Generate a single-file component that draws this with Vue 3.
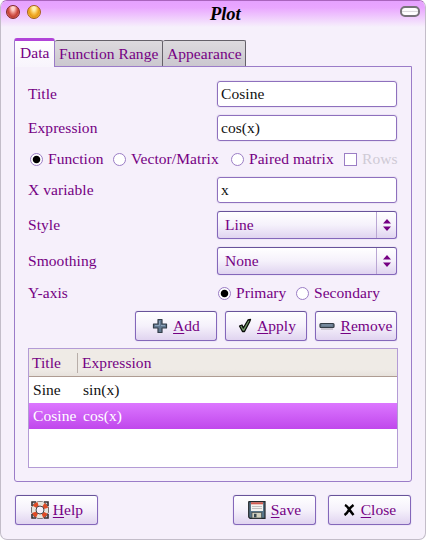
<script setup>
import { ref } from 'vue'

const plotTitle = ref('Cosine')
const expression = ref('cos(x)')
const variable = ref('x')
const kind = ref('Function')
const axis = ref('Primary')
const selected = ref(1)
const kinds = ['Function', 'Vector/Matrix', 'Paired matrix']
const axes = ['Primary', 'Secondary']
const plots = [
  { title: 'Sine', expression: 'sin(x)' },
  { title: 'Cosine', expression: 'cos(x)' },
]
</script>

<template>
  <div class="window">
    <header class="titlebar">
      <span class="orb red"></span><span class="orb amber"></span>
      <span class="caption">Plot</span>
      <span class="pill"></span>
    </header>

    <nav class="tabs">
      <div class="tab active">Data</div>
      <div class="tab range">Function Range</div>
      <div class="tab look">Appearance</div>
    </nav>

    <main class="panel">
      <div class="row entry"><label>Title</label><input v-model="plotTitle" class="field" /></div>
      <div class="row entry"><label>Expression</label><input v-model="expression" class="field" /></div>
      <div class="row kinds">
        <span v-for="k in kinds" :key="k" class="choice" @click="kind = k">
          <i class="radio" :class="{ on: kind === k }"></i>{{ k }}
        </span>
        <span class="choice disabled"><i class="check"></i>Rows</span>
      </div>
      <div class="row entry"><label>X variable</label><input v-model="variable" class="field" /></div>
      <div class="row combo-row">
        <label>Style</label>
        <div class="combo"><span>Line</span><b><svg width="8" height="12" viewBox="0 0 8 12"><path d="M4 0L8 4.500H0ZM4 12L8 7.500H0Z" fill="#750083" /></svg></b></div>
      </div>
      <div class="row combo-row">
        <label>Smoothing</label>
        <div class="combo"><span>None</span><b><svg width="8" height="12" viewBox="0 0 8 12"><path d="M4 0L8 4.500H0ZM4 12L8 7.500H0Z" fill="#750083" /></svg></b></div>
      </div>
      <div class="row axis">
        <label>Y-axis</label>
        <span v-for="a in axes" :key="a" class="choice" @click="axis = a">
          <i class="radio" :class="{ on: axis === a }"></i>{{ a }}
        </span>
      </div>

      <div class="row actions">
        <button class="btn">
          <svg class="add" width="16" height="16" viewBox="0 0 16 16">
            <path d="M6 1.500h4v4.500h4.500v4H10v4.500H6V10H1.500V6H6Z" fill="#637991" stroke="#343f4b" stroke-width="1.200" stroke-linejoin="round" />
            <path d="M7.500 3v4.500H3M9 7.500h4" fill="none" stroke="#8ba2b8" />
          </svg>
          <span><u>A</u>dd</span>
        </button>
        <button class="btn apply">
          <svg width="14" height="16" viewBox="0 0 14 16">
            <path d="M1.500 8L4 7L5.300 10L10 2L12.500 1.500L11.500 4L6.500 13.500H4.500Z" fill="#719567" stroke="#080b08" stroke-width="1.300" stroke-linejoin="round" />
          </svg>
          <span><u>A</u>pply</span>
        </button>
        <button class="btn">
          <svg class="remove" width="16" height="16" viewBox="0 0 16 16">
            <rect x="1" y="5.500" width="14" height="4" rx="1" fill="#67798c" stroke="#333c46" stroke-width="1.200" />
            <path d="M3 7h10" stroke="#8297ab" /><path d="M2 11h12" stroke="#aaa5b0" />
          </svg>
          <span><u>R</u>emove</span>
        </button>
      </div>

      <div class="table">
        <div class="thead"><span class="c1">Title</span><span class="c2">Expression</span></div>
        <div v-for="(p, i) in plots" :key="p.title" class="tr" :class="{ sel: selected === i }" @click="selected = i">
          <span class="c1">{{ p.title }}</span><span class="c2">{{ p.expression }}</span>
        </div>
      </div>
    </main>

    <footer class="footer">
      <button class="btn help">
        <svg width="20" height="20" viewBox="0 0 20 20">
          <path d="M2 6V2h4M14 2h4v4M18 14v4h-4M6 18H2v-4" fill="none" stroke="#332f2e" stroke-width="1.600" />
          <circle cx="10" cy="10" r="9" fill="#302c2a" />
          <circle cx="10" cy="10" r="6.200" fill="none" stroke="#e8e5dc" stroke-width="4.400" />
          <circle cx="10" cy="10" r="6.200" fill="none" stroke="#df4b25" stroke-width="4.400" stroke-dasharray="4.200 5.539" stroke-dashoffset="-2.800" />
          <circle cx="10" cy="10" r="4" fill="#f6f1fb" stroke="#4b4746" />
        </svg>
        <span><u>H</u>elp</span>
      </button>
      <button class="btn save">
        <svg width="18" height="18" viewBox="0 0 18 18">
          <path d="M1 .7H17V17.300H2L.7 16V1Z" fill="#587589" stroke="#23272b" stroke-width="1.200" />
          <rect x="3" y="1.500" width="12" height="8.500" fill="#f4f3f0" />
          <rect x="3" y="1.300" width="12" height="2" fill="#d35a50" />
          <path d="M4 5.500h10M4 7.500h10" stroke="#c2bfc0" />
          <rect x="4" y="11.500" width="9.500" height="5.500" fill="#d2d1bf" stroke="#474b4b" stroke-width=".7" />
          <rect x="6" y="12.800" width="2.500" height="3.500" fill="#364650" />
        </svg>
        <span><u>S</u>ave</span>
      </button>
      <button class="btn close">
        <svg width="12" height="12" viewBox="0 0 12 12">
          <path d="M2 1Q4 2 6 5T10.500 11M10.500 1Q7 3.500 5.500 6.500T1.500 11" fill="none" stroke="#000" stroke-width="2.500" />
        </svg>
        <span><u>C</u>lose</span>
      </button>
    </footer>
  </div>
</template>

<style>
body { margin: 0; background: #fff; }
</style>

<style scoped>
* { box-sizing: border-box; }
.window {
  width: 426px; height: 540px; overflow: hidden; display: flex; flex-direction: column;
  border: 1px solid #c3bdc9; border-top-color: #a963bd; border-radius: 7px; background: #f6f0fb;
  color: #750083; font: 15.5px/20px "Liberation Serif", serif; letter-spacing: .06px; white-space: nowrap;
}
.titlebar {
  height: 26px; flex: none; display: flex; align-items: flex-start; padding: 4px 5px 0;
  background: linear-gradient(#e6a1ff, #e9a6ff 25%, #f6f0fb);
}
.orb { width: 14px; height: 14px; border-radius: 50%; margin-right: 7px; border: 1px solid; }
.red { border-color: #7c2727; background: radial-gradient(ellipse at 50% 18%, #ffd1cb 0 15%, #dd6a60 45%, #c24036 62%, #ff9b8e); }
.amber { border-color: #a36116; background: radial-gradient(ellipse at 50% 18%, #fff1b0 0 15%, #f5b83c 45%, #e79a18 62%, #ffe55f); }
.caption { margin: 1px auto 0 162px; color: #000; font: italic bold 18.5px/17px "Z003", "URW Chancery L", "Liberation Serif", cursive; letter-spacing: -.1px; }
.pill { width: 20px; height: 11px; margin-top: 1px; border: 2px solid #777379; border-radius: 5px; background: linear-gradient(#fff 35%, #cfcbd1 45%, #fff 65%); }
.tabs { height: 39px; flex: none; margin-left: 13px; padding-top: 11px; display: flex; align-items: flex-end; position: relative; z-index: 1; }
.tab { height: 26px; padding: 3px 4px 0; border: 1px solid #656169; border-left: 0; border-radius: 2px 2px 0 0; border-bottom: 0; background: linear-gradient(#dddade, #cbc8cf); }
.tab.active { width: 41px; height: 29px; margin-bottom: -1px; padding: 2px 5px 0; border: 1px solid #9b7cc8; border-top: 3px solid #b143d8; border-bottom: 0; border-radius: 3px 3px 0 0; background: linear-gradient(#fff, #f8f4fc); }
.tab.range { width: 108px; }
.tab.look { width: 83px; }
.panel { width: 398px; height: 416px; flex: none; margin-left: 13px; padding: 14px 13px 0; border: 1px solid #9b7cc8; border-radius: 0 0 3px 3px; display: flex; flex-direction: column; }
.row { display: flex; align-items: center; flex: none; }
.row label { width: 189px; }
.entry { height: 26px; margin-bottom: 8px; }
.field { width: 180px; height: 26px; padding: 0 3px; border: 1px solid #8e70bd; border-radius: 3px; outline: 0; background: #fff; color: #111; font: inherit; letter-spacing: inherit; box-shadow: 0 0 0 1px #ece4f5; }
.kinds { height: 20px; margin: 0 0 8px 2px; }
.choice { display: flex; align-items: center; }
.radio, .check { width: 13px; height: 13px; margin-right: 5px; border: 1px solid #9b7dc5; background: #fff; flex: none; }
.radio { border-radius: 50%; }
.radio.on { background: radial-gradient(circle, #000 0 3.300px, #fff 4.200px); }
.kinds .choice:nth-child(1) { width: 83px; }
.kinds .choice:nth-child(2) { width: 118px; }
.kinds .choice:nth-child(3) { width: 113px; }
.disabled { color: #cfcad5; }
.combo-row { height: 28px; margin-bottom: 8px; }
.combo, .btn { border: 1px solid; border-color: #68539a #8467ba #8467ba; border-radius: 3px; background: linear-gradient(#fff, #f5f1fb 50%, #e0d4f0); box-shadow: 0 0 0 1px #eee7f7; }
.combo { width: 180px; height: 28px; display: flex; align-items: center; padding-left: 7px; }
.combo b { width: 20px; height: 26px; margin-left: auto; border-left: 1px solid #b9a6d3; display: flex; align-items: center; justify-content: center; }
.axis { height: 20px; margin-bottom: 8px; }
.axis label { width: 190px; }
.axis .choice { width: 78px; }
.actions { height: 30px; margin: 0 0 7px 107px; gap: 8px; }
.btn { width: 82px; height: 30px; padding: 0; display: flex; align-items: center; justify-content: center; gap: 5px; color: inherit; font: inherit; letter-spacing: inherit; }
.btn u { text-underline-offset: 2px; text-decoration-thickness: 1px; }
.btn svg { flex: none; }
.apply { padding-left: 2px; }
.table { width: 370px; height: 120px; flex: none; border: 1px solid #b39bd5; background: #fff; color: #111; }
.thead { height: 28px; display: flex; align-items: center; color: #750083; border-bottom: 1px solid #ae9c92; background: linear-gradient(#efebe6 75%, #e7e2dc); }
.thead .c1 { width: 49px; padding-left: 3px; border-right: 1px solid #b8aea9; }
.thead .c2 { padding-left: 4px; }
.tr { height: 26px; display: flex; align-items: center; padding-left: 4px; }
.tr .c1 { width: 50px; }
.sel { background: linear-gradient(#dc77ff, #c047ec); color: #fff; }
.footer { display: flex; margin: 13px 13px 0 14px; }
.footer .btn { width: 83px; }
.help { gap: 3px; }
.save { margin-left: 135px; }
.close { margin-left: 12px; gap: 6px; }
</style>
